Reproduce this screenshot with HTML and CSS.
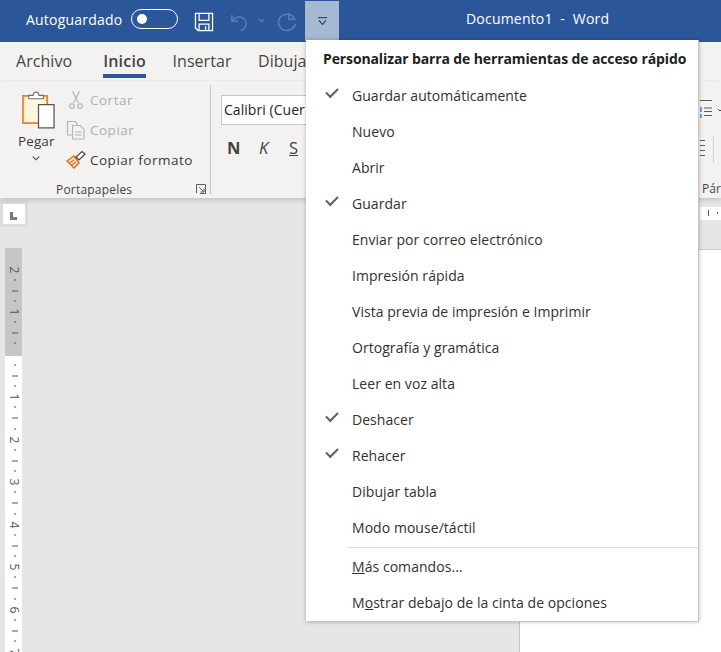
FILE: index.html
```html
<!DOCTYPE html>
<html lang="es">
<head>
<meta charset="utf-8">
<title>Documento1 - Word</title>
<link rel="stylesheet" href="styles.css">
</head>
<body>
<div class="app">
  <header class="titlebar">
    <span class="autosave">Autoguardado</span>
    <span class="toggle"><span class="knob"></span></span>
    <svg class="qat save" width="20" height="20" viewBox="0 0 22 22" fill="none" stroke="#fff" stroke-width="1.4"><path d="M1.6 1.6H20.4V20.4H4.5L1.6 17.5Z"/><path d="M5.6 1.800V9.200H16.400V1.800"/><path d="M5.600 20.200V13.400H16.400V20.200"/><path d="M12.800 15.600V20"/></svg>
    <svg class="qat undo" width="19" height="20" viewBox="0 0 20 20" fill="none" stroke="#5d80b4" stroke-width="1.5"><path d="M2 2.500V9H8.500"/><path d="M2.400 8.800C5 4.600 10 3.600 13.400 5.800C17.600 8.600 18 14 14.400 17.600L11 19.400"/></svg>
    <svg class="qat undo-more" width="7" height="5" viewBox="0 0 7 5" fill="none" stroke="#5d80b4" stroke-width="1.1"><path d="M.6 .8L3.5 3.700L6.400 .8"/></svg>
    <svg class="qat redo" width="20" height="20" viewBox="0 0 22 22" fill="none" stroke="#5d80b4" stroke-width="1.6"><path d="M13 1.200V8H20"/><path d="M19.400 7.600C17.600 4 14.400 2.400 11 2.400C5.800 2.400 1.600 6.400 1.600 11.400C1.600 16.400 5.800 20.400 11 20.400C15.600 20.400 19.400 17.200 20.200 13"/></svg>
    <button class="customize" type="button" aria-label="Personalizar">
      <svg width="9" height="9" viewBox="0 0 9 9" fill="none" stroke="#1f3f73" stroke-width="1.1"><path d="M0 .6H9"/><path d="M1 3.400L4.500 7.400L8 3.400"/></svg>
    </button>
    <span class="doc-title">Documento1&nbsp; - &nbsp;Word</span>
  </header>

  <nav class="tabs">
    <span class="tab first">Archivo</span>
    <span class="tab active">Inicio</span>
    <span class="tab">Insertar</span>
    <span class="tab">Dibuja</span>
    <span class="tab last">por</span>
  </nav>

  <section class="ribbon">
    <div class="group clipboard">
      <div class="group-body">
        <div class="paste">
          <svg width="35" height="39" viewBox="0 0 36 40" fill="none"><path d="M2 6H27V34H2Z" fill="#fdeec9" stroke="#e8812a" stroke-width="1.8"/><path d="M5 8H24V32H5Z" fill="#fff6df"/><path d="M8 9V5.500H12.500C12.500 1 18.500 1 18.500 5.500H23V9Z" fill="#fff" stroke="#6e6e6e" stroke-width="1.1"/><path d="M18 15H34V39H18Z" fill="#fff" stroke="#565656" stroke-width="1.3"/></svg>
          <span class="paste-label">Pegar</span>
          <svg class="paste-more" width="8" height="5" viewBox="0 0 8 5" fill="none" stroke="#444" stroke-width="1.1"><path d="M.8 .6L4 3.800L7.200 .6"/></svg>
        </div>
        <ul class="clip-actions">
          <li class="off">
            <svg width="18" height="20" viewBox="0 0 18 20" fill="none" stroke="#b4b2b0" stroke-width="1.1"><path d="M5.500 1L11.500 13"/><path d="M12.500 1L6.500 13"/><circle cx="5" cy="16" r="2.300"/><circle cx="13" cy="16" r="2.300"/></svg>
            <span>Cortar</span>
          </li>
          <li class="off">
            <svg width="20" height="20" viewBox="0 0 20 20" fill="none" stroke="#b4b2b0" stroke-width="1.1"><path d="M6 15H1.500V1.500H9L11 3.500V5"/><path d="M6.500 5.500H14L18 9.500V19H6.500Z"/><path d="M9 12H15.500M9 15H15.500"/></svg>
            <span>Copiar</span>
          </li>
          <li>
            <svg width="20" height="20" viewBox="0 0 20 20" fill="none"><path d="M1 11L8 6L13 13L8 18Z" fill="#fbe3c8" stroke="#e0701c" stroke-width="1.5"/><path d="M3 13L8 10M5 15.500L10 12" stroke="#e0701c" stroke-width="1.2"/><path d="M10 7L16 1.500L19 4L13 10Z" fill="#fff" stroke="#444" stroke-width="1.2"/></svg>
            <span>Copiar formato</span>
          </li>
        </ul>
      </div>
      <div class="group-label">
        <span>Portapapeles</span>
        <svg class="launcher" width="10" height="10" viewBox="0 0 10 10" fill="none" stroke="#605e5c"><path d="M.5 9V.5H9.500V9.500H4"/><path d="M3 3L8 8M8 4.500V8H4.500"/></svg>
      </div>
    </div>

    <div class="group font">
      <div class="font-name">Calibri (Cuer</div>
      <div class="font-styles">
        <span class="fmt bold">N</span>
        <span class="fmt italic">K</span>
        <span class="fmt under">S</span>
      </div>
    </div>

    <div class="group para">
      <div class="para-top">
        <svg width="21" height="20" viewBox="0 0 21 20" fill="none"><path d="M0 .5H12M4 8H12M4 11.500H12M4 15.500H12" stroke="#605e5c"/><path d="M1 7V12M1 14V18" stroke="#2b88d8" stroke-width="1.4"/><path d="M18 9L20 11L22 9" stroke="#444"/></svg>
      </div>
      <div class="para-mid">
        <svg width="5" height="18" viewBox="0 0 5 18" fill="#605e5c"><path d="M0 0H5V1H0ZM0 5H5V6H0ZM0 10H5V11H0ZM0 15H5V16H0Z"/></svg>
        <span class="para-rule"></span>
      </div>
      <div class="para-label">Pár</div>
    </div>
  </section>

  <main class="workspace">
    <div class="side">
      <div class="tab-stop"><span class="tab-mark"></span></div>
      <svg class="vruler" width="17" height="404" viewBox="0 248 17 404">
        <rect x="0" y="248" width="17" height="108" fill="#c6c6c6"/>
        <rect x="0" y="356" width="17" height="296" fill="#fff"/>
        <g class="ticks">
          <path d="M9 280h2M7 291h6M9 301h2M9 322h2M7 333h6M9 343h2M9 365h2M7 376h6M9 386h2M9 407h2M7 418h6M9 429h2M9 450h2M7 461h6M9 471h2M9 492h2M7 503h6M9 514h2M9 535h2M7 546h6M9 556h2M9 577h2M7 588h6M9 599h2M9 620h2M7 631h6M9 641h2"/>
        </g>
        <g class="nums">
          <text transform="translate(5 270) rotate(90)">2</text>
          <text transform="translate(5 312) rotate(90)">1</text>
          <text transform="translate(5 397) rotate(90)">1</text>
          <text transform="translate(5 440) rotate(90)">2</text>
          <text transform="translate(5 482) rotate(90)">3</text>
          <text transform="translate(5 525) rotate(90)">4</text>
          <text transform="translate(5 567) rotate(90)">5</text>
          <text transform="translate(5 610) rotate(90)">6</text>
          <text transform="translate(5 652) rotate(90)">7</text>
        </g>
      </svg>
    </div>
    <div class="doc-area">
      <div class="hruler"><span class="hmark"></span><span class="hdot"></span></div>
      <div class="page"></div>
    </div>
  </main>

  <div class="menu" role="menu">
    <div class="menu-title">Personalizar barra de herramientas de acceso rápido</div>
    <ul class="menu-list">
      <li class="checked">Guardar automáticamente</li>
      <li>Nuevo</li>
      <li>Abrir</li>
      <li class="checked">Guardar</li>
      <li>Enviar por correo electrónico</li>
      <li>Impresión rápida</li>
      <li>Vista previa de impresión e Imprimir</li>
      <li>Ortografía y gramática</li>
      <li>Leer en voz alta</li>
      <li class="checked">Deshacer</li>
      <li class="checked">Rehacer</li>
      <li>Dibujar tabla</li>
      <li>Modo mouse/táctil</li>
    </ul>
    <div class="menu-sep"></div>
    <ul class="menu-list">
      <li><u>M</u>ás comandos...</li>
      <li>M<u>o</u>strar debajo de la cinta de opciones</li>
    </ul>
  </div>
</div>
</body>
</html>
```
FILE: styles.css
```css
* { box-sizing: border-box; }
html, body { margin: 0; padding: 0; }
body {
  width: 721px;
  height: 652px;
  overflow: hidden;
  font-family: "Open Sans", "Noto Sans", sans-serif;
  color: #3b3a39;
}
.app { position: relative; width: 721px; height: 652px; overflow: hidden; background: #e6e6e6; display: flex; flex-direction: column; }

.titlebar { position: relative; flex: 0 0 42px; background: #2b579a; display: flex; align-items: center; color: #fff; padding-left: 26px; }
.autosave { font-size: 14px; letter-spacing: .2px; width: 105px; margin-top: -4px; }
.toggle { width: 47px; height: 20px; border: 1.5px solid #fff; border-radius: 10px; display: flex; align-items: center; padding-left: 5px; margin-top: -4px; }
.knob { width: 10px; height: 10px; border-radius: 50%; background: #fff; }
.qat { display: block; flex: none; margin-top: 2px; }
.save { margin-left: 16px; }
.undo { margin-left: 16px; }
.undo-more { margin-left: 9px; margin-top: -1px; }
.redo { margin-left: 12px; }
.customize { flex: none; align-self: flex-start; margin: 1px 0 0 8px; width: 34px; height: 40px; border: 0; padding: 0; background: #a6b9d2; display: flex; align-items: center; justify-content: center; }
.doc-title { position: absolute; left: 466px; top: 9px; font-size: 14px; letter-spacing: .2px; white-space: nowrap; }

.tabs { flex: 0 0 39px; background: #f3f2f1; display: flex; padding-left: 16px; gap: 26.500px; font-size: 16px; letter-spacing: .05px; white-space: nowrap; overflow: hidden; color: #444; }
.tab { height: 36px; padding-top: 8px; }
.tab.first { margin-right: 4.500px; }
.tab.active { font-weight: 600; color: #444; border-bottom: 4px solid #2b579a; letter-spacing: .2px; }
.tab.last { margin-left: 392px; }

.ribbon { flex: 0 0 117px; background: #f3f2f1; display: flex; box-shadow: 0 2px 5px rgba(0,0,0,.16); position: relative; z-index: 1; overflow: hidden; }
.group { position: relative; flex: none; }
.clipboard { width: 211px; margin-top: 4px; height: 109px; border-right: 1px solid #c8c6c4; }
.group-body { display: flex; height: 96px; }
.paste { width: 70px; padding: 5px 0 0 21px; display: flex; flex-direction: column; }
.paste-label { font-size: 13.500px; letter-spacing: .1px; margin: 3px 0 0 -3px; line-height: 18px; }
.paste-more { margin: 6px 0 0 11px; }
.clip-actions { list-style: none; margin: 0; padding: 0; font-size: 13.500px; letter-spacing: .5px; }
.clip-actions li { height: 30px; display: flex; align-items: center; width: 140px; white-space: nowrap; }
.clip-actions svg { flex: none; width: 20px; margin-left: -4px; }
.clip-actions span { margin-left: 4px; }
.clip-actions .off { color: #b1afad; }
.group-label { position: relative; height: 13px; padding: 0 0 0 56px; font-size: 12px; letter-spacing: .2px; line-height: 18px; color: #444; }
.launcher { position: absolute; left: 196px; top: 3px; }

.font { width: 489px; padding: 14px 0 0 10px; }
.font-name { width: 200px; height: 30px; background: #fff; border: 1px solid #c8c6c4; font-size: 14px; padding: 4px 0 0 2px; letter-spacing: .05px; color: #252423; }
.font-styles { display: flex; margin-top: 12px; padding-left: 6px; }
.fmt { width: 31px; font-size: 16.500px; line-height: 22px; color: #444; }
.bold { font-weight: 700; }
.italic { font-style: italic; padding-left: 1px; }
.under { text-decoration: underline; }

.para { width: 21px; }
.para-top { height: 55px; padding-top: 19px; }
.para-mid { display: flex; height: 40px; }
.para-mid svg { margin-top: 4px; }
.para-rule { width: 1px; height: 27px; margin-left: 8px; background: #d2d0ce; }
.para-label { font-size: 12px; white-space: nowrap; padding: 4px 0 0 2px; line-height: 18px; color: #444; }

.workspace { flex: 1; display: flex; min-height: 0; }
.side { flex: 0 0 519px; position: relative; }
.tab-stop { position: absolute; left: 0; top: 2px; width: 28px; height: 27px; background: #dcdcdc; padding: 4px 3px; }
.tab-stop::before { content: ""; display: block; width: 22px; height: 20px; background: #fff; }
.tab-mark { position: absolute; left: 10px; top: 12px; width: 7px; height: 8px; border-left: 3px solid #7a7a7a; border-bottom: 3px solid #7a7a7a; }
.vruler { position: absolute; left: 5px; top: 50px; display: block; }
.ticks path { stroke: #555; stroke-width: 1; fill: none; }
.nums text { font-family: "Open Sans", sans-serif; font-size: 12px; fill: #555; text-anchor: middle; }

.doc-area { flex: 1; padding-top: 9px; display: flex; flex-direction: column; border-left: 1px solid #c6c6c6; }
.hruler { position: relative; height: 13px; background: #fff; margin-left: 180px; }
.hmark { position: absolute; left: 8px; top: 3px; width: 1px; height: 6px; background: #555; }
.hdot { position: absolute; left: 17px; top: 5px; width: 1px; height: 2px; background: #555; }
.page { flex: 1; margin-top: 29px; background: #fff; border-top: 1px solid #cfcfcf; }

.menu { position: absolute; left: 306px; top: 40px; width: 393px; height: 582px; z-index: 5; background: #fff; border-right: 1px solid #c8c6c4; border-bottom: 1px solid #c8c6c4; box-shadow: 0 0 4px rgba(0,0,0,.28); font-size: 14px; letter-spacing: .05px; color: #323130; }
.menu-title { height: 38px; padding: 9px 0 0 17px; font-weight: 700; font-size: 14px; letter-spacing: -.12px; color: #201f1e; white-space: nowrap; }
.menu-list { list-style: none; margin: 0; padding: 0; }
.menu-list li { position: relative; height: 36px; line-height: 35px; padding-left: 46px; white-space: nowrap; }
.checked::before { content: ""; position: absolute; left: 20px; top: 10px; width: 10px; height: 5px; border-left: 2px solid #605e5c; border-bottom: 2px solid #605e5c; transform: rotate(-45deg); }
.menu-sep { height: 1px; margin: 1px 0 1px 41px; background: #dddcdb; }
```
